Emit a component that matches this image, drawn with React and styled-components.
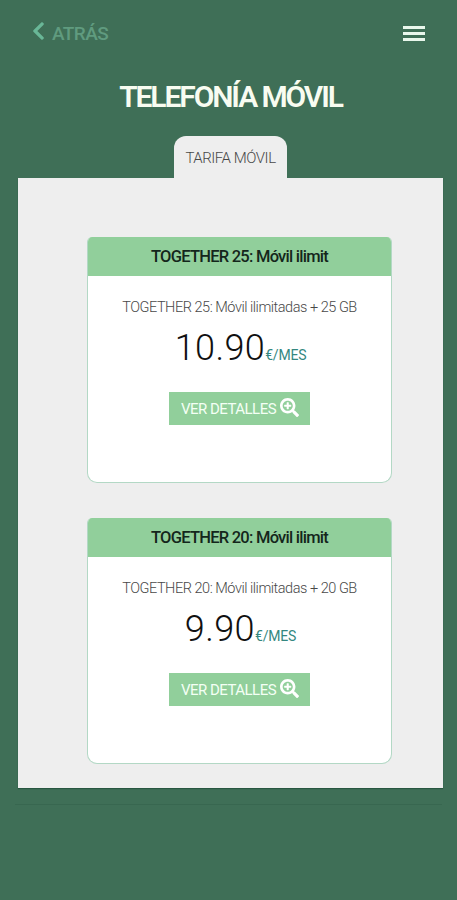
import React from 'react';
import styled, { createGlobalStyle } from 'styled-components';
import { FaChevronLeft, FaSearchPlus } from 'react-icons/fa';

const GlobalStyle = createGlobalStyle`
  * { box-sizing: border-box; }
  body { margin: 0; background: #3f6f57; font-family: Roboto, "Open Sans", sans-serif; }
`;

const Page = styled.main`
  display: flex;
  flex-direction: column;
  align-items: center;
  width: 100%;
  max-width: 457px;
  height: 900px;
  margin: 0 auto;
  background: #3f6f57;
  overflow: hidden;
`;

const TopBar = styled.header`
  display: flex;
  justify-content: space-between;
  align-items: center;
  width: 100%;
  height: 66px;
  padding: 0 32px;
`;

const BackLink = styled.a`
  display: flex;
  align-items: center;
  gap: 7px;
  color: #609b7f;
  font-size: 19px;
  font-weight: 500;
  line-height: 24px;
  white-space: nowrap;
  letter-spacing: -0.6px;

  svg { display: block; width: 13px; height: 22px; margin-top: -4px; color: #69b797; }
  span { padding-top: 1px; }
`;

const MenuButton = styled.button`
  display: flex;
  flex-direction: column;
  gap: 3px;
  width: 22px;
  padding: 0;
  border: 0;
  background: none;
`;

const MenuLine = styled.span`
  height: 3px;
  background: #e9f7ec;
`;

const Title = styled.h1`
  height: 40px;
  margin: 11px 0 19px;
  color: #f8fcf1;
  font-size: 30px;
  font-weight: 600;
  line-height: 39px;
  letter-spacing: -2.1px;
  white-space: nowrap;
  padding-left: 4px;
`;

const Tab = styled.div`
  width: 113px;
  height: 42px;
  border-radius: 12px 12px 0 0;
  background: #eee;
  color: #484848;
  font-size: 15px;
  font-weight: 300;
  line-height: 45px;
  letter-spacing: -0.45px;
  text-align: center;
  white-space: nowrap;
  margin-left: 4px;
`;

const Panel = styled.section`
  display: flex;
  flex-direction: column;
  align-items: center;
  gap: 35px;
  width: 425px;
  height: 610px;
  margin-left: 4px;
  padding: 59px 0 0 18px;
  background: #eee;
  box-shadow: 0 1px 1px #285640;
`;

const Card = styled.article`
  display: flex;
  flex-direction: column;
  align-items: center;
  width: 305px;
  height: 246px;
  flex: none;
  border: 1px solid #b3d8c5;
  border-top: 0;
  border-radius: 5px 5px 10px 10px;
  background: #fff;
  overflow: hidden;
`;

const CardHeader = styled.h2`
  width: 100%;
  height: 39px;
  margin: 0;
  background: #91cf9b;
  color: #14261b;
  font-size: 16.5px;
  font-weight: 500;
  line-height: 40px;
  letter-spacing: -0.75px;
  text-align: center;
  white-space: nowrap;
`;

const Description = styled.p`
  margin: 21px 0 0;
  height: 20px;
  color: #484848;
  font-size: 14.5px;
  font-weight: 300;
  line-height: 21px;
  letter-spacing: -0.47px;
  white-space: nowrap;
`;

const Price = styled.p`
  display: flex;
  align-items: baseline;
  height: 50px;
  margin: 5px 0 0 2px;
  color: #101010;
  font-size: 36px;
  font-weight: 300;
  line-height: 52px;
  letter-spacing: 0.4px;
  white-space: nowrap;
`;

const Unit = styled.span`
  color: #348780;
  font-size: 14px;
  font-weight: 400;
  letter-spacing: -0.2px;
`;

const DetailsButton = styled.button`
  display: flex;
  align-items: center;
  justify-content: space-between;
  width: 141px;
  height: 33px;
  margin-top: 20px;
  padding: 0 11px 0 12px;
  border: 0;
  background: #91cf9b;
  color: #f4fff5;
  font-family: inherit;
  font-size: 15px;
  font-weight: 400;
  letter-spacing: -0.52px;
  white-space: nowrap;

  svg { width: 19px; height: 19px; flex: none; margin-top: -3px; color: #fff; }
`;

const Divider = styled.hr`
  width: 427px;
  height: 1px;
  margin: 16px 0 0;
  border: 0;
  background: #386750;
`;

const plans = [
  { id: 25, price: '10.90' },
  { id: 20, price: '9.90' },
];

export default function App() {
  return (
    <>
      <GlobalStyle />
      <Page>
        <TopBar>
          <BackLink><FaChevronLeft /><span>ATRÁS</span></BackLink>
          <MenuButton aria-label="Menú"><MenuLine /><MenuLine /><MenuLine /></MenuButton>
        </TopBar>
        <Title>TELEFONÍA MÓVIL</Title>
        <Tab>TARIFA MÓVIL</Tab>
        <Panel>
          {plans.map(({ id, price }) => (
            <Card key={id}>
              <CardHeader>TOGETHER {id}: Móvil ilimit</CardHeader>
              <Description>TOGETHER {id}: Móvil ilimitadas + {id} GB</Description>
              <Price>{price}<Unit>€/MES</Unit></Price>
              <DetailsButton>VER DETALLES<FaSearchPlus /></DetailsButton>
            </Card>
          ))}
        </Panel>
        <Divider />
      </Page>
    </>
  );
}
